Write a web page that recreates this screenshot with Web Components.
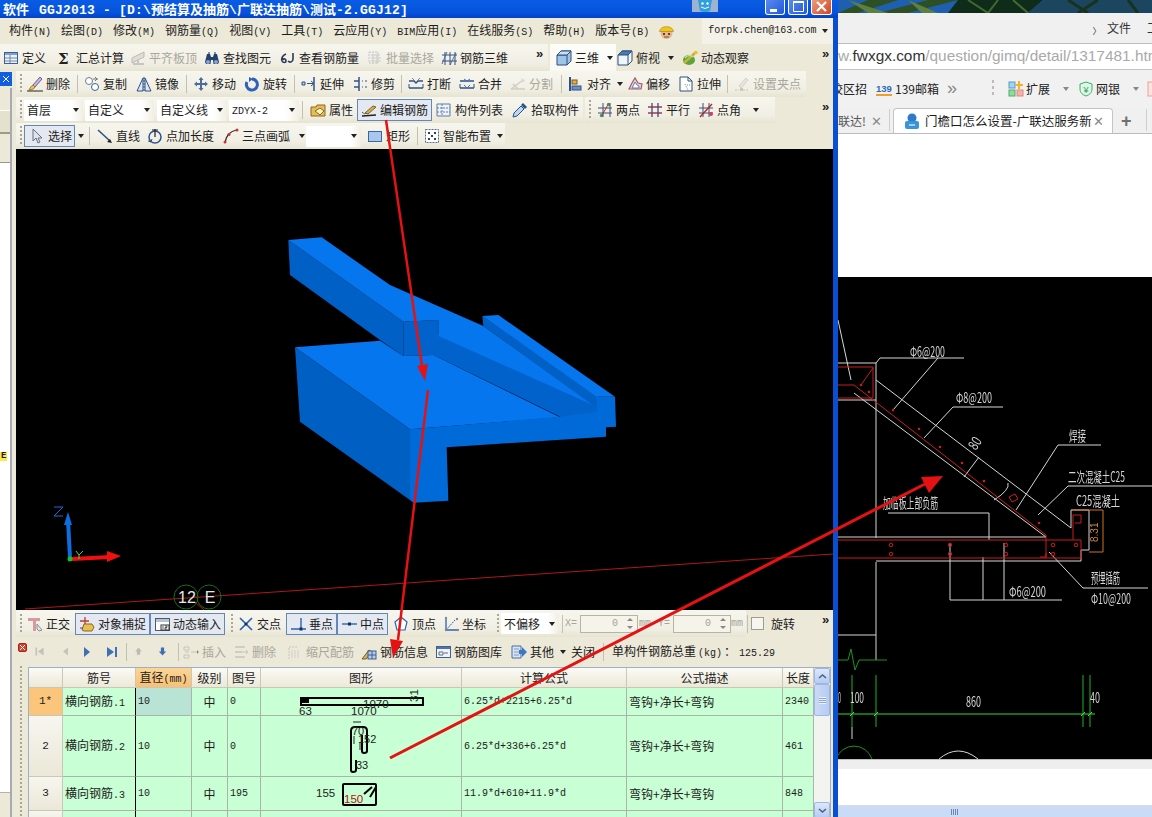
<!DOCTYPE html>
<html lang="zh">
<head>
<meta charset="utf-8">
<title>GGJ2013</title>
<style>
html,body{margin:0;padding:0;background:#fff;}
body{width:1152px;height:817px;overflow:hidden;display:flex;position:relative;font:12px/1 "Noto Sans CJK SC","Liberation Sans",sans-serif;color:#1c1c1c;}
</style>
</head>
<body>
<cad-window></cad-window>
<browser-pane></browser-pane>
<arrow-overlay></arrow-overlay>
<script>
const ICONS = {
    def:'<rect x="1.5" y="2.5" width="13" height="11" fill="#eef3fb" stroke="#3c5f97"/><rect x="2" y="3" width="12" height="2" fill="#7fa0cf"/><path d="M7 5v8M2 8h12M2 11h12" stroke="#6d86ad"/>',
    sigma:'<text x="1" y="14" font-family="DejaVu Serif" font-weight="700" font-size="15" fill="#222">Σ</text>',
    flush:'<path d="M2 13V8l6-3 6-3v5l-6 3z" fill="#d9d9d2" stroke="#aaa"/><path d="M3 14h11M8 10v4" stroke="#bbb" stroke-width="2"/>',
    binoc:'<path d="M1 12l2-8h3l1 3h2l1-3h3l2 8-1 2H9.500L9 10H7l-.5 4H2z" fill="#24406f"/><circle cx="4" cy="12" r="2" fill="#8aa3cc"/><circle cx="12" cy="12" r="2" fill="#8aa3cc"/><path d="M4 2h2v2H4zM10 2h2v2h-2z" fill="#7a8fb3"/>',
    sixj:'<path d="M6 4C3 5 1 8 2 11c1 2 4 2 4 0S4 8 2.500 10M13 3v6c0 3-3 4-5 2" fill="none" stroke="#2b3a55" stroke-width="1.600"/>',
    batch:'<path d="M2 2h9v11H2z" fill="#eee" stroke="#bbb" stroke-dasharray="2 1"/><path d="M4 5h9M4 8h10M4 11h10M6 4v10M10 4v10" stroke="#c5c5c0"/>',
    grid3d:'<path d="M1 5h15M1 11h15M4 2v13M9 2v13M14 2v13" stroke="#32507f" fill="none"/><path d="M1 14L6 2M9 15l6-12" stroke="#4b6c9f"/>',
    cube:'<path d="M1 5l4-4h10v10l-4 4H1z" fill="#9fc4e8" stroke="#2f4f7a"/><path d="M1 5h10v10M11 5l4-4" fill="none" stroke="#2f4f7a"/><path d="M1 5l4-4h10l-4 4z" fill="#c8def3" stroke="#2f4f7a"/>',
    cube2:'<path d="M1 5l4-4h10v10l-4 4H1z" fill="#eef5fb" stroke="#2f4f7a"/><path d="M1 5l4-4h10l-4 4z" fill="#4a7db3" stroke="#2f4f7a"/><path d="M11 5v10M11 5l4-4" fill="none" stroke="#2f4f7a"/>',
    orbit:'<ellipse cx="7" cy="10" rx="6" ry="5" fill="#5aa53c"/><path d="M2 13L14 2" stroke="#c8b23a" stroke-width="2.500"/><path d="M3 8c2-3 6-3 8-1" stroke="#bde29f" fill="none" stroke-width="1.500"/><circle cx="14" cy="2.500" r="1.700" fill="#e6c22d"/>',
    brush:'<path d="M6 9l7-8 2 2-7 8z" fill="#c7b6d9" stroke="#6f6294"/><path d="M6 9c-2 1-3 3-4 5 3 0 5-1 6-3z" fill="#e7c35b" stroke="#9c7d25"/><path d="M0 15h16" stroke="#222"/>',
    copy:'<circle cx="5" cy="5" r="3.500" fill="#fff" stroke="#727b8c"/><circle cx="11" cy="11" r="3.500" fill="#fff" stroke="#39629a"/><path d="M11 1l2 2-2 2M14 3H9" stroke="#777" fill="none"/>',
    mirror:'<path d="M7 2v13H1zM9 2v13h6z" fill="#dbe6f4" stroke="#2f5288"/><path d="M8 1v15" stroke="#2f5288" stroke-dasharray="2 1"/>',
    move:'<path d="M8 1l2.500 3H9v3h3V5.500L15 8l-3 2.500V9H9v3h1.500L8 15l-2.500-3H7V9H4v1.500L1 8l3-2.500V7h3V4H5.500z" fill="#4b6c9c"/>',
    rotate:'<path d="M8 3a5.500 5.500 0 1 1-5 3" fill="none" stroke="#2c62bc" stroke-width="3"/><path d="M5 1l4 2-4 3z" fill="#2c62bc"/>',
    extend:'<path d="M13 1v14" stroke="#2f5288" stroke-width="1.500"/><path d="M1 6h3v3H1zM6 7.500h6" stroke="#2f5288" fill="#bcd0ea"/><path d="M10 5l3 2.500-3 2.500" fill="none" stroke="#2f5288"/>',
    trim:'<path d="M7 1v14M2 5h5M2 11h5" stroke="#2f5288" stroke-width="1.500"/><path d="M10 5h1M13 5h2M10 11h1M13 11h2" stroke="#2f5288"/>',
    brk:'<path d="M1 5h5l2 2 2-2h5M1 12h14" stroke="#2f5288" stroke-width="1.500" fill="none"/><path d="M4 2l3 3M12 2L9 5" stroke="#6b87b2"/><path d="M1 8v4M15 8v4" stroke="#2f5288"/>',
    merge:'<path d="M1 5h14M1 12h14" stroke="#2f5288" stroke-width="1.500"/><path d="M5 3l3 2 3-2M5 9l3 3 3-3" fill="none" stroke="#4e73a8"/><path d="M1 8v4M15 8v4" stroke="#2f5288"/>',
    split:'<path d="M1 13h14M1 13l12-9M3 8l5 5" stroke="#c6c6bf" stroke-width="1.500" fill="none"/><path d="M11 2l4 2-2 3z" fill="#d4d4cd"/>',
    align:'<path d="M2 1v14" stroke="#2f5288" stroke-width="2"/><rect x="4" y="4" width="5" height="4" fill="#e3ae42" stroke="#7a5a16"/><rect x="4" y="10" width="9" height="4" fill="#6d8fc4" stroke="#2f5288"/>',
    offset:'<path d="M2 13l3-6 3-5 3 5 4 1-1 5z" fill="#e9d6dc" stroke="#a3576a" stroke-width="1.200"/><path d="M5 12l2-4 1-2 2 3 2 1v2z" fill="#fff" stroke="#5d7caa"/>',
    stretch:'<path d="M2 1h8l4 4v10H2z" fill="#fff" stroke="#2f4f7a"/><path d="M10 1v4h4" fill="none" stroke="#2f4f7a"/><path d="M7 8l3 6M9 9h3" stroke="#888" stroke-dasharray="1 1"/>',
    grips:'<path d="M1 14h4M9 14h6" stroke="#bdbdb6" stroke-dasharray="2 1"/><rect x="6" y="12" width="3" height="3" fill="#bdbdb6"/><path d="M5 10l7-8 2 2-7 8z" fill="#e4e4de" stroke="#c8c8c1"/>',
    prop:'<path d="M1 5h5l1-2h8v11H1z" fill="#e5bb5c" stroke="#8d6a1a"/><path d="M5 9l5-3 4 3-4 4z" fill="#fff3c2" stroke="#8d6a1a"/>',
    edit:'<path d="M1 14l14-1" stroke="#222" stroke-width="1.300"/><path d="M4 11l8-7 3 1-8 7z" fill="#d5b14a" stroke="#7a6020"/><path d="M1 10c2 2 3 2 4 1" stroke="#555" fill="none"/>',
    list:'<path d="M1 2h13v12H1z" fill="#eef3fb" stroke="#5e7ba8"/><path d="M6 2v12M1 6h13M1 10h13" stroke="#5e7ba8" stroke-dasharray="2 1"/>',
    pick:'<path d="M1 15l1-4 7-7 3 3-7 7z" fill="#bcd7f0" stroke="#27518a"/><path d="M9 3l2-2 4 4-2 2z" fill="#27518a"/>',
    twopt:'<path d="M1 6h14M1 11h14" stroke="#3c4f78"/><path d="M4 15L12 1" stroke="#b22a2a"/><circle cx="4.500" cy="13.500" r="1.700" fill="#5f8f3c"/><circle cx="11.500" cy="2.500" r="1.700" fill="#5f8f3c"/><path d="M6 1v14M13 1v14" stroke="#3c4f78"/>',
    para:'<path d="M1 5h14M1 11h14" stroke="#a33b56" stroke-width="1.300"/><path d="M5 1v14M11 1v14" stroke="#3c4f78" stroke-width="1.300"/>',
    angle:'<path d="M1 6h14M1 11h14M5 1v14M11 1v14" stroke="#3c4f78"/><path d="M2 15L14 2" stroke="#b22a2a" stroke-width="1.400"/><circle cx="13" cy="12" r="2" fill="#d8395a"/>',
    arrow:'<path d="M4 1v12l3-3 2 5 2-1-2-4h4z" fill="#dfe4ee" stroke="#656f85"/>',
    line:'<path d="M1 2l12 11" stroke="#2f5288" stroke-width="1.600"/><path d="M15 15l-5-1 3-3z" fill="#222"/>',
    ptlen:'<circle cx="8" cy="9" r="6" fill="none" stroke="#2f5288" stroke-width="1.500"/><path d="M8 9V1M5 2h6" stroke="#222" stroke-width="1.200"/><path d="M1 13l3 1 1-3" fill="none" stroke="#2f5288"/>',
    arc:'<path d="M2 15C3 8 7 3 14 2" fill="none" stroke="#222" stroke-width="1.200"/><circle cx="2" cy="14" r="1.500" fill="#c33"/><circle cx="6" cy="6.500" r="1.500" fill="#c33"/><circle cx="14" cy="2" r="1.500" fill="#c33"/>',
    rect:'<rect x="1.500" y="3.500" width="13" height="10" fill="#a9c6ec" stroke="#3a66a6"/>',
    smart:'<rect x="1.500" y="1.500" width="13" height="13" fill="#fff" stroke="#5a6a80" stroke-dasharray="2 1"/><path d="M4 4h2v2H4zM10 4h2v2h-2zM4 10h2v2H4zM10 10h2v2h-2zM7 7h2v2H7z" fill="#24406f"/>',
    ortho:'<path d="M1 2h12v3H9v10H6V5H1z" fill="#d89aa0"/><path d="M10 8l5 6-3 1-2-2z" fill="#e6e6e6" stroke="#8a8f99"/>',
    snap:'<path d="M6 1v7M1 5h9" stroke="#c2392b" stroke-width="1.300"/><path d="M3 14l2-6h8l2 3-2 4H5z" fill="#e8bf55" stroke="#8d6a1a"/><path d="M1 12h3" stroke="#2f5288"/>',
    dyn:'<rect x="1.500" y="2.500" width="14" height="12" fill="#fff" stroke="#4a5a70"/><path d="M2 3h13v3H2z" fill="#b7c4d6"/><rect x="7" y="9" width="8" height="5" fill="#fff" stroke="#333"/><path d="M9 10v3M11 10h2v1.500h-2V13h2" stroke="#333" stroke-width=".8" fill="none"/>',
    cross:'<path d="M2 2l12 12M14 2L2 14" stroke="#2f62ad" stroke-width="1.700"/><circle cx="8" cy="8" r="1.500" fill="#12305f"/>',
    perp:'<path d="M1 13h16M11 2v11" stroke="#2f62ad" stroke-width="1.400"/><rect x="9.500" y="11.500" width="3" height="3" fill="#12305f"/>',
    mid:'<path d="M1 8h15" stroke="#2f62ad" stroke-width="1.400"/><rect x="7" y="6.500" width="3" height="3" fill="#12305f"/>',
    vertex:'<path d="M8 1l6 5-2 8H4L2 6z" fill="#fff" stroke="#2f62ad" stroke-width="1.200"/>',
    coord:'<path d="M3 2v12h12" stroke="#2f62ad" stroke-width="1.300" fill="none"/><path d="M3 14l9-10" stroke="#2f62ad" stroke-dasharray="2 1"/><circle cx="3" cy="2" r="1.200" fill="#888"/><circle cx="14" cy="3" r="1.200" fill="#888"/><circle cx="15" cy="14" r="1.200" fill="#888"/><circle cx="3" cy="14" r="1.200" fill="#888"/>',
    first:'<path d="M3 3h2v10H3zM13 3v10L6 8z" fill="#c3c3bb"/>',
    prev:'<path d="M11 3v10L5 8z" fill="#c3c3bb"/>',
    next:'<path d="M5 3v10l6-5z" fill="#3d70b8"/>',
    last:'<path d="M3 3v10l7-5zM11 3h2v10h-2z" fill="#3d70b8"/>',
    up:'<path d="M8 3l4 5H10v4H6V8H4z" fill="#bcbcb4"/>',
    down:'<path d="M6 3h4v5h2.500L8 13 3.500 8H6z" fill="#3d70b8"/>',
    insert:'<path d="M1 3h5v3H1zM1 11h5v3H1z" fill="none" stroke="#bcbcb4"/><path d="M8 8h8M14 6l2 2-2 2M2 8h4" stroke="#bcbcb4"/>',
    del:'<path d="M2 3h10M2 8h7M2 13h10" stroke="#bcbcb4" stroke-width="1.500"/><path d="M9 8h6M13 6l2 2-2 2" stroke="#bcbcb4" fill="none"/>',
    scale:'<path d="M2 15V3h9" fill="none" stroke="#bcbcb4" stroke-dasharray="2 1"/><path d="M5 14V6M8 14V6M11 14V6" stroke="#c9c9c2"/>',
    info:'<path d="M1 15l7-9 3 2-6 7z" fill="#cdb060" stroke="#7a6020"/><rect x="7" y="7" width="8" height="8" fill="#b9cbe4" stroke="#3c5f97"/><path d="M11 7v8M7 11h8" stroke="#3c5f97"/>',
    lib:'<rect x="1.500" y="2.500" width="14" height="11" fill="#f0f3f8" stroke="#3c5f97"/><path d="M2 3h13v2H2z" fill="#4d74ad"/><path d="M4 8h4v3H4zM9 9h4" stroke="#5c6c86" fill="none"/>',
    other:'<path d="M1 2h9v12H1z" fill="#d9e5f5" stroke="#4b6c9c"/><path d="M3 5h5M3 8h5M3 11h5" stroke="#7f96bb"/><path d="M8 6h3V3l5 5-5 5v-3H8z" fill="#3d78c8"/>'
};

class ToolIcon extends HTMLElement {
    connectedCallback(){
        const s = this.getAttribute('size') || 16;
        this.attachShadow({mode:'open'}).innerHTML = `
        <style>:host{display:inline-block;flex:none;line-height:0}</style>
        <svg width="${s}" height="${s}" viewBox="0 0 16 16">${ICONS[this.getAttribute('name')] || ''}</svg>`;
    }
}
customElements.define('tool-icon', ToolIcon);

// small latin text, the ascii half of the old gdi font
class LatText extends HTMLElement {
    constructor(){
        super();
        this.attachShadow({mode:'open'}).innerHTML = `<style>:host{font-family:"Liberation Mono",monospace;font-size:10px}</style><slot></slot>`;
    }
}
customElements.define('lat-text', LatText);

class DropCaret extends HTMLElement {
    constructor(){
        super();
        this.attachShadow({mode:'open'}).innerHTML = `
        <style>:host{display:inline-block;flex:none;width:0;height:0;border:3px solid transparent;border-top:4px solid #222;border-bottom:0}</style>`;
    }
}
customElements.define('drop-caret', DropCaret);

class ToolBtn extends HTMLElement {
    connectedCallback(){
        const icon = this.getAttribute('icon');
        const caret = this.getAttribute('caret');
        this.attachShadow({mode:'open'}).innerHTML = `
        <style>
        :host{display:inline-flex;align-items:center;flex:none;box-sizing:border-box;height:22px;padding-left:3px;gap:3px;border:1px solid transparent;white-space:nowrap;width:${this.getAttribute('w') || 52}px}
        :host([on]){border-color:#6586b8;background:#e3e8f1}
        :host([off]){color:#a8a79c}
        :host([off]) tool-icon{opacity:.8}
        drop-caret{margin-left:${caret || 0}px}
        </style>
        ${icon ? `<tool-icon name="${icon}"></tool-icon>` : ''}
        <slot></slot>
        ${caret ? '<drop-caret></drop-caret>' : ''}`;
    }
}
customElements.define('tool-btn', ToolBtn);

class ToolSep extends HTMLElement {
    constructor(){
        super();
        this.attachShadow({mode:'open'}).innerHTML = `
        <style>:host{display:block;flex:none;width:1px;height:18px;margin:0 2px;background:#c2c0ae}</style>`;
    }
}
customElements.define('tool-sep', ToolSep);

class ToolGrip extends HTMLElement {
    constructor(){
        super();
        this.attachShadow({mode:'open'}).innerHTML = `
        <style>:host{display:block;flex:none;width:2px;height:20px;background:repeating-linear-gradient(#aaa791 0 2px,transparent 2px 4px)}</style>`;
    }
}
customElements.define('tool-grip', ToolGrip);

class MoreMark extends HTMLElement {
    constructor(){
        super();
        this.attachShadow({mode:'open'}).innerHTML = `<style>:host{display:block;flex:none;font:700 13px/1 "Liberation Sans",sans-serif;letter-spacing:-1px;align-self:flex-start;margin-top:3px;color:#222}</style>»`;
    }
}
customElements.define('more-mark', MoreMark);

class ToolCombo extends HTMLElement {
    connectedCallback(){
        const w = this.getAttribute('w');
        this.attachShadow({mode:'open'}).innerHTML = `
        <style>
        :host{display:flex;align-items:center;flex:none;box-sizing:border-box;width:${w}px;height:21px;padding:0 4px 0 3px;background:#fff}
        .t{flex:1;white-space:nowrap;overflow:hidden}
        :host([tint]){background:linear-gradient(90deg,#fff 80%,#f1efe3)}
        </style>
        <div class="t"><slot></slot></div><drop-caret></drop-caret>`;
    }
}
customElements.define('tool-combo', ToolCombo);

class ToolBand extends HTMLElement {
    constructor(){
        super();
        this.attachShadow({mode:'open'}).innerHTML = `
        <style>:host{display:flex;align-items:center;flex:none;box-sizing:border-box;height:100%;background:linear-gradient(#f7f6ee,#f1efe4 70%,#e7e4d2)}
        :host([bright]){background:linear-gradient(#fdfdfa,#f9f8f2)}</style><slot></slot>`;
    }
}
customElements.define('tool-band', ToolBand);

class ToolRow extends HTMLElement {
    constructor(){
        super();
        this.attachShadow({mode:'open'}).innerHTML = `
        <style>:host{display:flex;align-items:center;flex:none;height:26px;background:#ece9d8;position:relative;overflow:hidden}</style><slot></slot>`;
    }
}
customElements.define('tool-row', ToolRow);

class TitleBar extends HTMLElement {
    constructor(){
        super();
        this.attachShadow({mode:'open'}).innerHTML = `
        <style>
        :host{display:flex;align-items:flex-start;height:18px;background:linear-gradient(#0a5ce4,#0553dc 70%,#0342c4);color:#fff;overflow:hidden}
        .t{flex:none;width:692px;padding:1px 0 0 3px;box-sizing:border-box;font:700 13px/15px "Noto Sans CJK SC",sans-serif;white-space:nowrap}
        .t span{font:700 13px/15px "Liberation Mono",monospace;letter-spacing:.2px}
        .tray{width:26px;height:12px;background:#9fb3d0;display:flex;justify-content:center}
        .btn{width:20px;height:15px;margin-left:3px;box-sizing:border-box;border:1px solid #fff;border-top:0;border-radius:0 0 3px 3px;background:linear-gradient(135deg,#5a8bf0,#2458d8);line-height:0}
        .btn.x{width:21px;background:linear-gradient(135deg,#eb9c80,#d2431e)}
        .sp{width:44px}
        </style>
        <div class="t">软件 <span style="margin-left:7px">GGJ2013 - [D:\\</span>预结算及抽筋<span>\\</span>广联达抽筋<span>\\</span>测试<span>-2.GGJ12]</span></div>
        <div class="tray"><svg width="18" height="12" viewBox="0 0 18 12"><path d="M2 0h14l-2 11q-5 2-10 0z" fill="#2f9fe0"/><circle cx="6.500" cy="3.500" r="1.200" fill="#fff"/><circle cx="11.500" cy="3.500" r="1.200" fill="#fff"/><path d="M5 7q4 3 8 0" stroke="#fff" fill="none"/></svg></div>
        <div class="sp"></div>
        <div class="btn"><svg width="18" height="14"><rect x="4" y="9" width="7" height="3" fill="#fff"/></svg></div>
        <div class="btn"><svg width="18" height="14"><path d="M4.500 1.500h10v10h-10z" fill="none" stroke="#fff"/><path d="M4 2h11" stroke="#fff" stroke-width="2"/></svg></div>
        <div class="btn x"><svg width="19" height="14"><path d="M5 2l9 9M14 2l-9 9" stroke="#fff" stroke-width="2.200"/></svg></div>`;
    }
}
customElements.define('title-bar', TitleBar);

class MenuBar extends HTMLElement {
    constructor(){
        super();
        const items = [['构件','(N)'],['绘图','(D)'],['修改','(M)'],['钢筋量','(Q)'],['视图','(V)'],['工具','(T)'],['云应用','(Y)'],['BIM应用','(I)'],['在线服务','(S)'],['帮助','(H)'],['版本号','(B)']];
        this.attachShadow({mode:'open'}).innerHTML = `
        <style>
        :host{display:flex;align-items:center;height:26px;background:#ece9d8;padding-left:9px;white-space:nowrap;flex:none}
        span{margin-right:10px}
        .ac{display:flex;align-items:center;justify-content:space-between;box-sizing:border-box;width:131px;height:26px;margin-left:27px;padding:0 5px 0 6px;background:#f4f2e8}
        svg{flex:none;margin-left:-1px}
        </style>
        ${items.map(i => `<span>${i[0].replace('BIM','<lat-text>BIM</lat-text>')}<lat-text>${i[1]}</lat-text></span>`).join('')}
        <svg width="17" height="17" viewBox="0 0 17 17"><circle cx="8.500" cy="10" r="6" fill="#e9b58c"/><path d="M1.500 8.500C2 2 15 2 15.500 8.500z" fill="#f0c419" stroke="#a5810e" stroke-width=".6"/><circle cx="6" cy="11" r="1" fill="#222"/><circle cx="11" cy="11" r="1" fill="#222"/><path d="M6 14h5" stroke="#8a4a2a"/></svg>
        <div class="ac"><lat-text>forpk.chen@163.com</lat-text><drop-caret></drop-caret></div>`;
    }
}
customElements.define('menu-bar', MenuBar);

class LeftDock extends HTMLElement {
    constructor(){
        super();
        this.attachShadow({mode:'open'}).innerHTML = `
        <style>
        :host{display:flex;flex-direction:column;box-sizing:border-box;width:16px;flex:none;background:#ece9d8;padding:1px 4px 0 0}
        .x{width:12px;height:14px;margin-bottom:2px;background:#0f5fe0;color:#fff;line-height:0}
        .in{flex:1;display:flex;flex-direction:column;width:12px;box-sizing:border-box;border-right:2px solid #a9a9b6}
        .b{height:21px;margin-top:22px;background:#e4e1cd;border-top:1px solid #fff;border-bottom:2px solid #9d9b88}
        .w{flex:1;margin-top:28px;background:#fff;border-top:1px solid #99978a}
        .e{margin-top:289px;width:7px;height:9px;background:#ffe84c;font:700 9px/9px "Liberation Mono",monospace;overflow:hidden;text-indent:1px}
        .f{height:24px;border-top:1px solid #b5b3a4}
        </style>
        <div class="x"><svg width="12" height="14"><path d="M3 4l6 6M9 4l-6 6" stroke="#fff"/></svg></div>
        <div class="in"><div class="b"></div><div class="w"><div class="e">E</div></div><div class="f"></div></div>`;
    }
}
customElements.define('left-dock', LeftDock);

class View3d extends HTMLElement {
    constructor(){
        super();
        this.attachShadow({mode:'open'}).innerHTML = `
        <style>:host{display:block;flex:none;height:461px;background:#000;overflow:hidden}svg{display:block}</style>
        <svg width="817" height="461" viewBox="16 149 817 461">
        <path d="M25 609L833 554" stroke="#b01818" stroke-width="1"/>
        <path d="M195 602l9 8" stroke="#b01818"/>
        <g fill="none" stroke="#176b17"><circle cx="186" cy="597" r="12"/><circle cx="209" cy="597" r="12"/></g>
        <g font-family="Liberation Sans" font-size="16" fill="#e8e8e8" text-anchor="middle"><text x="187" y="603">12</text><text x="210" y="603">E</text></g>
        <g transform="translate(270 220) scale(.33333)" stroke-linejoin="round">
            <path d="M55 60L60 165 330 360 400 408 400 305z" fill="#0060c6"/>
            <path d="M400 305L505 300 505 345 985 555 975 640 870 590 490 405 400 408z" fill="#0062ca"/>
            <path d="M55 60L155 52 360 195 640 318 980 560 505 348 505 300 400 305z" fill="#0576ee"/>
            <path d="M637 288L985 528 985 568 640 318z" fill="#0060c6"/>
            <path d="M637 288L685 285 1035 530 980 530z" fill="#0576ee"/>
            <path d="M75 382L330 362 400 408 490 405 870 592 420 628z" fill="#0576ee"/>
            <path d="M75 382L90 605 420 840 420 628z" fill="#005fc2"/>
            <path d="M420 628L870 590 980 575 980 530 1035 530 1038 620 1008 622 1008 650 530 682 535 842 430 848 420 840z" fill="#006ad9"/>
        </g>
        <path d="M70 558L68 520" stroke="#0b6fe0" stroke-width="4"/><path d="M68 512l-4 13h8z" fill="#0b6fe0"/>
        <path d="M72 559L110 557" stroke="#f01010" stroke-width="4"/><path d="M121 556l-14-5v11z" fill="#f01010"/>
        <circle cx="70" cy="559" r="2.500" fill="#19c419"/>
        <path d="M76 551l3 4 4-4M79 555v4" stroke="#4dd24d" fill="none"/>
        <path d="M54 507h9l-9 9h9" stroke="#2468d8" fill="none"/>
        </svg>`;
    }
}
customElements.define('view-3d', View3d);

class SpinBox extends HTMLElement {
    constructor(){
        super();
        this.attachShadow({mode:'open'}).innerHTML = `
        <style>
        :host{display:flex;align-items:center;flex:none;box-sizing:border-box;width:58px;height:18px;border:1px solid #b5b4a8;background:#f5f3ea;color:#a5a498;font:10px "Liberation Mono",monospace}
        .v{flex:1;text-align:right;padding-right:5px}
        .s{width:14px;height:100%;display:flex;flex-direction:column;align-items:center;justify-content:space-around}
        i{width:0;height:0;border:3px solid transparent}
        .u{border-bottom-color:#888;border-top:0}.d{border-top-color:#888;border-bottom:0}
        </style><div class="v"><slot></slot></div><div class="s"><i class="u"></i><i class="d"></i></div>`;
    }
}
customElements.define('spin-box', SpinBox);

class SnapBar extends HTMLElement {
    constructor(){
        super();
        this.attachShadow({mode:'open'}).innerHTML = `
        <style>
        :host{display:block;flex:none}
        tool-row{height:27px}
        .g{color:#a5a498;font:10px "Liberation Mono",monospace;flex:none}
        .cb{flex:none;width:11px;height:11px;border:1px solid #9d9d94;background:#f6f5ee}
        </style>
        <tool-row>
          <tool-band style="width:730px;padding-left:4px">
            <tool-grip></tool-grip>
            <tool-btn icon="ortho" w="52" style="margin-left:1px">正交</tool-btn>
            <tool-btn icon="snap" w="75" on>对象捕捉</tool-btn>
            <tool-btn icon="dyn" w="75" on>动态输入</tool-btn>
            <tool-grip style="margin:0 1px 0 6px"></tool-grip>
            <tool-btn icon="cross" w="52">交点</tool-btn>
            <tool-btn icon="perp" w="51" on>垂点</tool-btn>
            <tool-btn icon="mid" w="51" on>中点</tool-btn>
            <tool-btn icon="vertex" w="50" style="margin-left:1px">顶点</tool-btn>
            <tool-btn icon="coord" w="52">坐标</tool-btn>
            <tool-grip style="margin:0 2px 0 6px"></tool-grip>
            <tool-combo w="58" tint>不偏移</tool-combo>
            <tool-sep style="margin-left:3px"></tool-sep>
            <span class="g" style="width:15px">X=</span>
            <spin-box>0</spin-box>
            <span class="g" style="width:19px;margin-left:1px">mm</span>
            <span class="g" style="width:15px">Y=</span>
            <spin-box>0</spin-box>
            <span class="g">mm</span>
          </tool-band>
          <tool-sep style="margin-left:1px"></tool-sep>
          <div class="cb" style="margin:0 7px 0 1px"></div>
          <span style="margin-right:27px">旋转</span>
          <more-mark></more-mark>
        </tool-row>`;
    }
}
customElements.define('snap-bar', SnapBar);

class RebarBar extends HTMLElement {
    constructor(){
        super();
        this.attachShadow({mode:'open'}).innerHTML = `
        <style>
        :host{display:block;flex:none}
        tool-row{height:29px;padding-left:2px}
        .close{flex:none;width:9px;height:9px;margin:-9px 0 0 0;background:#d8402a;border:1px solid #a02818;border-radius:2px;box-sizing:border-box;line-height:0}
        .nav{flex:none;width:24px;display:flex;justify-content:center}
        .t{flex:none;white-space:nowrap}
        </style>
        <tool-row>
          <div class="close"><svg width="7" height="7"><path d="M1 1l5 5M6 1L1 6" stroke="#fff"/></svg></div>
          <div class="nav"><tool-icon name="first" size="13"></tool-icon></div>
          <div class="nav" style="margin-left:2px"><tool-icon name="prev" size="13"></tool-icon></div>
          <div class="nav" style="margin-left:-2px"><tool-icon name="next"></tool-icon></div>
          <div class="nav" style="margin-left:1px"><tool-icon name="last"></tool-icon></div>
          <tool-sep></tool-sep>
          <div class="nav" style="margin-left:-3px"><tool-icon name="up" size="13"></tool-icon></div>
          <div class="nav"><tool-icon name="down" size="13"></tool-icon></div>
          <tool-sep style="margin-left:4px"></tool-sep>
          <tool-btn icon="insert" w="50" off style="margin-left:-2px">插入</tool-btn>
          <tool-btn icon="del" w="54" off>删除</tool-btn>
          <tool-btn icon="scale" w="74" off>缩尺配筋</tool-btn>
          <tool-btn icon="info" w="74">钢筋信息</tool-btn>
          <tool-btn icon="lib" w="76">钢筋图库</tool-btn>
          <tool-btn icon="other" w="60" caret="3">其他</tool-btn>
          <span class="t" style="margin-left:4px">关闭</span>
          <tool-sep style="margin-left:8px;margin-right:8px"></tool-sep>
          <span class="t">单构件钢筋总重<lat-text style="margin:0 2px">(kg)</lat-text>：<lat-text style="margin-left:3px">125.29</lat-text></span>
        </tool-row>`;
    }
}
customElements.define('rebar-bar', RebarBar);

class RebarGrid extends HTMLElement {
    constructor(){
        super();
        const rows = [
            ['1*','横向钢筋.1','10','0',`<svg class="s" width="200" height="28" viewBox="261 688 200 28">
                <rect x="301" y="698" width="122" height="7" fill="none" stroke="#000" stroke-width="2"/><rect x="300" y="698" width="9" height="5" fill="#000"/>
                <g font-family="Liberation Sans" font-size="11.500" fill="#222"><text x="299" y="715">63</text><text x="351" y="715">1070</text><text x="363" y="708">1070</text><text transform="translate(418 702) rotate(-90)">31</text></g></svg>`,'6.25*d+2215+6.25*d','2340'],
            ['2','横向钢筋.2','10','0',`<svg class="s" width="200" height="60" viewBox="261 716 200 60">
                <path d="M356 760V770Q356 772 353 772 351 772 351 770V731Q351 727 355 727H363Q367 727 367 731V751Q367 753 364 753 362 753 362 751V735" fill="none" stroke="#000" stroke-width="2"/>
                <path d="M353 722h8M354 736v8M360 742v8" stroke="#222"/>
                <g font-family="Liberation Sans" font-size="11" fill="#222"><text x="352" y="735">70</text><text x="358" y="743">152</text><text x="356" y="769">33</text></g></svg>`,'6.25*d+336+6.25*d','461'],
            ['3','横向钢筋.3','10','195',`<svg class="s" width="200" height="33" viewBox="261 777 200 33">
                <rect x="343" y="784" width="33" height="21" rx="1" fill="none" stroke="#000" stroke-width="2"/><path d="M364 794l8-7M370 797l6-10" stroke="#000" stroke-width="2"/>
                <text x="316" y="797" font-family="Liberation Sans" font-size="11.500" fill="#222">155</text><text x="344" y="803" font-family="Liberation Sans" font-size="11.500" fill="#b01212">150</text></svg>`,'11.9*d+610+11.9*d','848']
        ];
        const head = ['','筋号','<span>直径<lat-text>(mm)</lat-text></span>','级别','图号','图形','计算公式','公式描述','长度'];
        const rowHtml = rows.map((r,i) => `
            <div class="c rh${i==0?' cur':''}"><lat-text style="font-size:11px">${r[0]}</lat-text></div>
            <div class="c l bk"><span>${r[1].replace(/\.\d/,m=>`<lat-text>${m}</lat-text>`)}</span></div>
            <div class="c l m${i==0?' sel':''}">${r[2]}</div>
            <div class="c">中</div>
            <div class="c l m">${r[3]}</div>
            <div class="c dr">${r[4]}</div>
            <div class="c l m">${r[5]}</div>
            <div class="c l">弯钩+净长+弯钩</div>
            <div class="c l m">${r[6]}</div>`).join('');
        const tail = Array(9).fill(0).map((_,i)=>`<div class="c${i==0?' rh':''}${i==1?' bk':''}"></div>`).join('');
        this.attachShadow({mode:'open'}).innerHTML = `
        <style>
        :host{display:flex;flex:1;min-height:0;background:#ece9d8;overflow:hidden;padding-right:2px}
        .strip{flex:none;width:12px;display:flex;justify-content:center}
        .strip i{display:block;width:2px;margin-right:3px;background:repeating-linear-gradient(#aaa791 0 2px,transparent 2px 4px)}
        .tb{display:flex;flex:1;min-width:0;border:1px solid #9fb0c4;border-bottom:0;background:#fff;margin-top:1px}
        .g{flex:none;display:grid;grid-template-columns:34px 73px 56px 36px 33px 201px 165px 156px 31px;grid-template-rows:20px 28px 61px 34px 20px;align-self:flex-start}
        .h,.c{display:flex;align-items:center;justify-content:center;box-sizing:border-box;border-right:1px solid #a8b5a8;border-bottom:1px solid #a8b5a8;white-space:nowrap;min-width:0}
        .h{background:linear-gradient(#fbfaf5,#ece9d8);border-color:#c9c7b7;color:#222}
        .h.act{background:linear-gradient(#fbd596,#f9c074)}
        .c{background:#c8ffd4}
        .rh{background:linear-gradient(#f7f6ef,#ebe8d8);border-color:#c9c7b7}
        .cur{background:#fbc67c}
        .l{justify-content:flex-start;padding-left:2px}
        .m{font:10px "Liberation Mono",monospace;padding-left:2px}
        .sel{background:#b9e3d5}
        .bk{border-right:1px solid #000}
        .dr{overflow:visible;position:relative;padding:0}
        .s{display:block;overflow:visible;flex:none}
        .sb{flex:none;width:16px;background:#f3f3f0;display:flex;flex-direction:column;align-items:stretch}
        .sb b{display:flex;align-items:center;justify-content:center;height:16px;background:linear-gradient(#dce7fa,#b7ccf2);border:1px solid #9db6e2;box-sizing:border-box;border-radius:2px}
        .th{height:32px;background:linear-gradient(90deg,#cadaf6,#b7ccf2);border:1px solid #9db6e2;box-sizing:border-box;border-radius:2px;display:flex;align-items:center;justify-content:center}
        .th i{display:block;width:7px;height:7px;background:repeating-linear-gradient(#eef3fd 0 1px,#8aa6d8 1px 2px)}
        .sp{flex:1}
        </style>
        <div class="strip"><i></i></div>
        <div class="tb">
          <div class="g">
            ${head.map((h,i)=>`<div class="h${i==2?' act':''}">${h}</div>`).join('')}
            ${rowHtml}${tail}
          </div>
          <div class="sb">
            <b><svg width="9" height="7"><path d="M1 5l3.500-3L8 5" fill="none" stroke="#4d6185" stroke-width="1.600"/></svg></b>
            <div class="th"><i></i></div><div class="sp"></div>
            <b style="margin-bottom:-1px"><svg width="9" height="7"><path d="M1 2l3.500 3L8 2" fill="none" stroke="#4d6185" stroke-width="1.600"/></svg></b>
          </div>
        </div>`;
    }
}
customElements.define('rebar-grid', RebarGrid);

class CadWindow extends HTMLElement {
    constructor(){
        super();
        this.attachShadow({mode:'open'}).innerHTML = `
        <style>
        :host{display:flex;flex-direction:column;flex:none;width:838px;height:817px;background:#ece9d8;overflow:hidden}
        .body{display:flex;flex:1;min-height:0;border-right:5px solid #0a4ed2}
        .col{flex:1;min-width:0;display:flex;flex-direction:column}
        .r1{height:27px;border-right:5px solid #0a4ed2}
        </style>
        <title-bar></title-bar>
        <menu-bar style="border-right:5px solid #0a4ed2"></menu-bar>
        <tool-row class="r1">
          <tool-band style="width:548px;padding-left:0">
            <tool-btn icon="def" w="54" style="margin-left:-1px">定义</tool-btn>
            <tool-btn icon="sigma" w="73">汇总计算</tool-btn>
            <tool-btn icon="flush" w="74" off>平齐板顶</tool-btn>
            <tool-btn icon="binoc" w="76">查找图元</tool-btn>
            <tool-btn icon="sixj" w="87">查看钢筋量</tool-btn>
            <tool-btn icon="batch" w="74" off>批量选择</tool-btn>
            <tool-btn icon="grid3d" w="99">钢筋三维</tool-btn>
            <more-mark></more-mark>
          </tool-band>
          <tool-band bright style="width:66px;padding-left:2px;margin-left:2px">
            <tool-btn icon="cube" w="63" caret="5">三维</tool-btn>
          </tool-band>
          <tool-btn icon="cube2" w="65" caret="5" style="margin-left:-3px">俯视</tool-btn>
          <tool-btn icon="orbit" w="140">动态观察</tool-btn>
          <more-mark style="margin-left:4px"></more-mark>
        </tool-row>
        <div class="body">
          <left-dock></left-dock>
          <div class="col">
            <tool-row>
              <tool-band style="width:790px;padding-left:4px">
                <tool-grip style="margin-right:1px"></tool-grip>
                <tool-btn icon="brush" w="52">删除</tool-btn><tool-sep></tool-sep>
                <tool-btn icon="copy" w="52">复制</tool-btn>
                <tool-btn icon="mirror" w="52">镜像</tool-btn><tool-sep></tool-sep>
                <tool-btn icon="move" w="51">移动</tool-btn>
                <tool-btn icon="rotate" w="52">旋转</tool-btn><tool-sep></tool-sep>
                <tool-btn icon="extend" w="51">延伸</tool-btn>
                <tool-btn icon="trim" w="51">修剪</tool-btn><tool-sep></tool-sep>
                <tool-btn icon="brk" w="51">打断</tool-btn>
                <tool-btn icon="merge" w="51">合并</tool-btn>
                <tool-btn icon="split" w="53" off>分割</tool-btn><tool-sep></tool-sep>
                <tool-btn icon="align" w="59" caret="3">对齐</tool-btn>
                <tool-btn icon="offset" w="51">偏移</tool-btn>
                <tool-btn icon="stretch" w="51">拉伸</tool-btn><tool-sep></tool-sep>
                <tool-btn icon="grips" w="76" off>设置夹点</tool-btn>
              </tool-band>
            </tool-row>
            <tool-row>
              <tool-band style="width:567px;padding-left:4px">
                <tool-grip style="margin-right:2px"></tool-grip>
                <tool-combo w="59" tint>首层</tool-combo>
                <tool-combo w="69" tint style="margin-left:2px">自定义</tool-combo>
                <tool-combo w="70" tint style="margin-left:3px">自定义线</tool-combo>
                <tool-combo w="70" tint style="margin-left:2px"><lat-text>ZDYX-2</lat-text></tool-combo>
                <tool-sep style="margin:0 2px 0 3px"></tool-sep>
                <tool-btn icon="prop" w="52" style="margin-left:1px">属性</tool-btn>
                <tool-btn icon="edit" w="75" on style="margin-left:-1px">编辑钢筋</tool-btn>
                <tool-btn icon="list" w="76">构件列表</tool-btn>
                <tool-btn icon="pick" w="72">拾取构件</tool-btn>
              </tool-band>
              <tool-band style="width:190px;padding-left:4px;margin-left:2px">
                <tool-grip style="margin-right:2px"></tool-grip>
                <tool-btn icon="twopt" w="50">两点</tool-btn>
                <tool-btn icon="para" w="51">平行</tool-btn>
                <tool-btn icon="angle" w="66" caret="9">点角</tool-btn>
              </tool-band>
              <more-mark style="margin-left:47px"></more-mark>
            </tool-row>
            <tool-row>
              <tool-band style="width:489px;padding-left:4px">
                <tool-grip style="margin-right:2px"></tool-grip>
                <tool-btn icon="arrow" w="51" on style="padding-left:4px">选择</tool-btn>
                <drop-caret style="margin-left:3px"></drop-caret>
                <tool-sep style="margin-left:5px;margin-right:3px"></tool-sep>
                <tool-btn icon="line" w="50">直线</tool-btn>
                <tool-btn icon="ptlen" w="76">点加长度</tool-btn>
                <tool-btn icon="arc" w="87" caret="6">三点画弧</tool-btn>
                <tool-combo w="55" tint>&nbsp;</tool-combo>
                <tool-btn icon="rect" w="53" style="margin-left:2px">矩形</tool-btn>
                <tool-sep style="margin-left:1px"></tool-sep>
                <tool-btn icon="smart" w="79" caret="3">智能布置</tool-btn>
              </tool-band>
            </tool-row>
            <view-3d></view-3d>
            <snap-bar></snap-bar>
            <rebar-bar></rebar-bar>
            <rebar-grid></rebar-grid>
          </div>
        </div>`;
    }
}
customElements.define('cad-window', CadWindow);

class CadDrawing extends HTMLElement {
    constructor(){
        super();
        const dots = [[893,410],[919,429],[940,447],[962,463],[984,481],[1039,523],[869,392],[861,385]];
        const rings = [[891,545],[891,554],[950,545],[950,554],[1006,545],[1006,554],[1053,545],[1053,554],[1076,545]];
        this.attachShadow({mode:'open'}).innerHTML = `
        <style>:host{display:block;flex:none;height:482px;background:#000;overflow:hidden}svg{display:block;filter:blur(.35px)}</style>
        <svg width="314" height="482" viewBox="838 277 314 482">
        <g fill="none" stroke="#d6d6d6">
          <path d="M838 320L851 380M838 363H876M838 400H876M876 363V538M876 562V660M838 635H876"/>
          <path d="M876 363L880 358H964M938 358L893 410M1003 407H953L924 438"/>
          <path d="M876 380L1071 528V510H1089V550H1081V561H876M854 393L1046 537H838"/>
          <path d="M1038 515L1068 486H1152M1101 445H1058L1016 510"/>
          <path d="M964 477L979 457M1008 483Q1010 490 994 500"/>
          <path d="M888 513H989V540M950 543V600H1062M1004 543V600M983 557V600M1049 552L1083 588H1148"/>
          <path d="M852 727V739"/>
          <path d="M939 759Q958 743 978 759"/>
        </g>
        <g fill="none" stroke="#cb1d1d">
          <path d="M838 367H873V398H838M838 385H854L1046 535V558M838 540H1081V558H838M1073 540V515H1081V523H1075M861 385L873 368M1040 557H1046V553"/>
          <path d="M1009 497l6-3 3 5-6 3z"/>
        </g>
        <g fill="none" stroke="#cb1d1d">${rings.map(p=>`<circle cx="${p[0]}" cy="${p[1]}" r="1.800"/>`).join('')}</g>
        <g fill="#cb1d1d">${dots.map(p=>`<circle cx="${p[0]}" cy="${p[1]}" r="1.300"/>`).join('')}</g>
        <path d="M1071 510H1103V552H1089" fill="none" stroke="#d0701f"/>
        <g fill="none" stroke="#1f931f">
          <path d="M838 660H848L851 649 855 670 859 660H887"/>
          <path d="M852 675V727M876 675V727M1083 675V727M1090 675V727" stroke-width="1.200"/>
          <path d="M838 714H1095" stroke-width="1.500"/>
          <path d="M836 759A19 19 0 0 1 872 759"/>
          <path d="M850 716l4-4M874 716l4-4M1081 716l4-4M1088 716l4-4" stroke="#5fd45f"/>
        </g>
        <g fill="#d4d4d4" font-family="Noto Sans CJK SC,sans-serif" font-size="14">
          <text x="910" y="357" textLength="35" lengthAdjust="spacingAndGlyphs">Φ6@200</text>
          <text x="956" y="403" textLength="36" lengthAdjust="spacingAndGlyphs">Φ8@200</text>
          <text transform="translate(976 451) rotate(-58)" textLength="12" lengthAdjust="spacingAndGlyphs">80</text>
          <text x="1069" y="441" textLength="17" lengthAdjust="spacingAndGlyphs">焊接</text>
          <text x="1068" y="482" textLength="57" lengthAdjust="spacingAndGlyphs">二次混凝土C25</text>
          <text x="1076" y="506" textLength="44" lengthAdjust="spacingAndGlyphs">C25混凝土</text>
          <text x="883" y="508" textLength="55" lengthAdjust="spacingAndGlyphs">加临板上部负筋</text>
          <text x="1091" y="583" textLength="29" lengthAdjust="spacingAndGlyphs">预埋插筋</text>
          <text x="1091" y="604" textLength="40" lengthAdjust="spacingAndGlyphs">Φ10@200</text>
          <text x="1009" y="597" textLength="37" lengthAdjust="spacingAndGlyphs">Φ6@200</text>
          <text x="850" y="703" textLength="14" lengthAdjust="spacingAndGlyphs">100</text>
          <text x="966" y="707" textLength="15" lengthAdjust="spacingAndGlyphs">860</text>
          <text x="1090" y="703" textLength="10" lengthAdjust="spacingAndGlyphs">40</text>
          <text x="838" y="703" textLength="3" lengthAdjust="spacingAndGlyphs">0</text>
        </g>
        <text transform="translate(1098 542) rotate(-90)" fill="#c8843c" font-family="Liberation Sans" font-size="10">8.31</text>
        </svg>`;
    }
}
customElements.define('cad-drawing', CadDrawing);

class BrowserPane extends HTMLElement {
    constructor(){
        super();
        this.attachShadow({mode:'open'}).innerHTML = `
        <style>
        :host{display:flex;flex-direction:column;flex:1;min-width:0;height:817px;overflow:hidden;background:#fff}
        .photo{height:13px;flex:none;line-height:0}
        .menu{height:30px;flex:none;box-sizing:border-box;background:#f0f0f0;display:flex;align-items:center;justify-content:flex-end;color:#333;gap:16px;margin-right:-19px;font-size:12px;white-space:nowrap}
        .menu b{font:400 14px "Liberation Sans";color:#888;margin-right:-6px;transform:scaleY(1.500)}
        .addr{height:27px;flex:none;box-sizing:border-box;border-top:1px solid #bdbdbd;border-bottom:1px solid #c2c2c2;background:#fff;font:15.400px/24px "Liberation Sans",sans-serif;color:#a9a9a9;white-space:nowrap;overflow:hidden}
        .addr span{color:#333}
        .bm{height:37px;flex:none;box-sizing:border-box;background:#f1f1f1;display:flex;align-items:center;white-space:nowrap;overflow:hidden;color:#222}
        .bm>*{flex:none}
        .tabs{height:27px;flex:none;box-sizing:border-box;background:#f0f0f0;border-bottom:1px solid #bcbcbc;display:flex;align-items:flex-end;white-space:nowrap;overflow:hidden}
        .tab{display:flex;align-items:center;box-sizing:border-box;height:26px;margin-bottom:-1px}
        .tab.on{width:220px;margin-left:3px;background:#fff;border:1px solid #c4c4c4;border-bottom:0;border-radius:4px 4px 0 0;padding-left:10px;font-size:12.500px}
        .ttl{width:166px;overflow:hidden;margin-left:5px}
        .x{font:400 13px "Liberation Sans";color:#8a8a8a;flex:none}
        .div{width:1px;height:22px;background:#cfcfcf;flex:none;margin-bottom:2px}
        .blank{height:143px;flex:none}
        .foot1{height:10px;flex:none;background:#eee;border-top:1px solid #bdbdbd;box-sizing:border-box}
        .foot2{flex:1}
        .hbar{height:12px;flex:none;background:#c9dbf7;border-top:1px solid #ddd;box-sizing:border-box;padding-left:113px;line-height:0}
        </style>
        <div class="photo"><svg width="314" height="13" viewBox="0 0 314 13">
          <rect width="314" height="13" fill="#1f5fb0"/>
          <path d="M0 13L30 0H60L20 13zM40 13L90 0h30L70 13z" fill="#2d4f26"/>
          <path d="M10 0l40 13H30zM70 0l30 13H84z" fill="#5c7f44"/>
          <path d="M120 0H205L190 13H110z" fill="#0f2c1b"/>
          <path d="M130 0l20 13M160 0l-10 13M175 0l15 13" stroke="#3f6b2e" stroke-width="2"/>
          <path d="M205 0H314V13H190z" fill="#1c4560"/>
          <path d="M230 0l20 13M260 0l-20 13M290 0l10 13" stroke="#17321f" stroke-width="3"/>
        </svg></div>
        <div class="menu"><b>›</b><span>文件</span><span>工具</span></div>
        <div class="addr">w.<span>fwxgx.com</span>/question/gimq/detail/1317481.html</div>
        <div class="bm">
          <span style="margin-left:-7px;width:45px">校区招</span>
          <svg width="16" height="14" viewBox="0 0 16 14" style="margin-right:3px"><rect y="12" width="16" height="2" fill="#f39a2b"/><text x="0" y="10" font-family="Liberation Sans" font-weight="700" font-size="9.500" fill="#2a6db8">139</text></svg>
          <span style="width:52px">139邮箱</span>
          <span style="width:45px;font:400 18px 'Liberation Sans';color:#888">»</span>
          <span style="width:2px;height:18px;background:repeating-linear-gradient(#bbb 0 3px,transparent 3px 6px);margin-right:14px"></span>
          <svg width="16" height="16" viewBox="0 0 16 16" style="margin-right:2px"><rect x="1" y="1" width="6" height="6" fill="#9fd3f5" stroke="#5a9ad0"/><rect x="1" y="9" width="6" height="6" fill="#8fdc9f" stroke="#55aa6a"/><rect x="9" y="9" width="6" height="6" fill="#f7b0a8" stroke="#d88"/><path d="M12 0v3h3v2h-3v3h-2V5H7V3h3V0z" fill="#f2b52a"/></svg>
          <span style="width:37px">扩展</span><drop-caret style="border-top-color:#888;margin-right:9px"></drop-caret>
          <svg width="16" height="16" viewBox="0 0 16 16" style="margin-right:2px"><path d="M8 1l6 2v5c0 4-3 6-6 7-3-1-6-3-6-7V3z" fill="#dff5e6" stroke="#3aae6a"/><text x="8" y="12" text-anchor="middle" font-family="Liberation Sans" font-size="9" fill="#2c9e5c">¥</text></svg>
          <span style="width:37px">网银</span><drop-caret style="border-top-color:#888;margin-right:8px"></drop-caret>
          <svg width="14" height="16" viewBox="0 0 14 16"><rect x="1" y="1" width="13" height="14" fill="#fde2dd" stroke="#e8a49a"/></svg>
        </div>
        <div class="tabs">
          <div class="tab" style="width:51px;color:#555;gap:5px"><span>联达!</span><span class="x">✕</span></div>
          <div class="div"></div>
          <div class="tab on" style="margin-left:3px">
            <svg width="16" height="17" viewBox="0 0 16 17"><circle cx="8" cy="5" r="4.500" fill="#2d7ac8"/><rect x="1" y="8" width="14" height="8" rx="2" fill="#3a94d8"/><path d="M5 12h6" stroke="#bfe3fa" stroke-width="1.500"/></svg>
            <span class="ttl">门檐口怎么设置-广联达服务新</span><span class="x" style="margin-left:2px">✕</span>
          </div>
          <div class="tab" style="margin-left:8px;width:17px;font:700 18px 'Liberation Sans';color:#6f6f6f">+</div>
          <div class="div" style="margin-left:8px"></div>
        </div>
        <div class="blank"></div>
        <cad-drawing></cad-drawing>
        <div class="foot1"></div><div class="foot2"></div>
        <div class="hbar"><svg width="8" height="10"><path d="M.5 3v6M2.500 3v6M4.500 3v6M6.500 3v6" stroke="#6c86b4"/></svg></div>`;
    }
}
customElements.define('browser-pane', BrowserPane);

class ArrowOverlay extends HTMLElement {
    constructor(){
        super();
        this.attachShadow({mode:'open'}).innerHTML = `
        <style>:host{position:absolute;left:0;top:0;width:1152px;height:817px;pointer-events:none}svg{display:block}</style>
        <svg width="1152" height="817" viewBox="0 0 1152 817">
        <g stroke="#e41212" stroke-width="2.500" fill="#e41212">
          <path d="M386 120L422 366"/>
          <path d="M428 390L398 640"/>
          <path d="M390 758L925 484" stroke-width="3"/>
        </g>
        <g fill="#e41212">
          <path d="M425 381L417 366 428 364z"/>
          <path d="M393 658L390 639 403 641z"/>
          <path d="M943 476L921 477 929 493z"/>
        </g>
        </svg>`;
    }
}
customElements.define('arrow-overlay', ArrowOverlay);
</script>
</body>
</html>
